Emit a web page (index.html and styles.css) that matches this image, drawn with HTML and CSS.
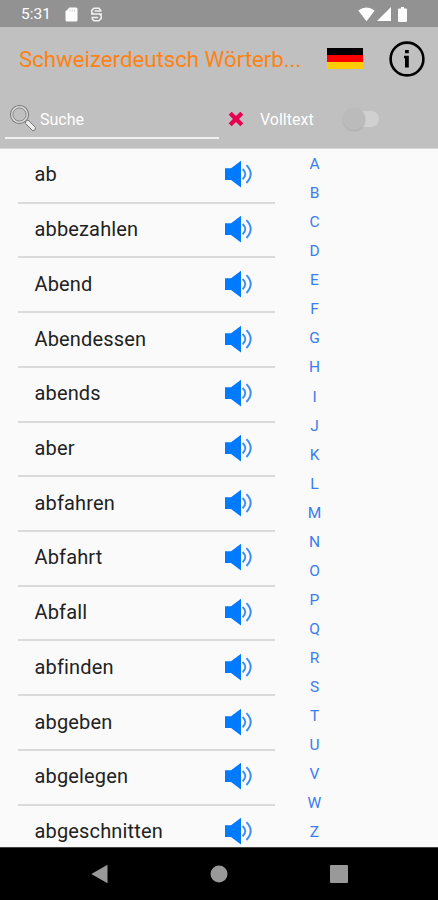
FILE: index.html
```
<!DOCTYPE html>
<html lang="de">
<head>
    <meta charset="UTF-8">
    <meta name="viewport" content="width=device-width, initial-scale=1.0">
    <title>Schweizerdeutsch Wörterbuch</title>
    <link rel="stylesheet" href="styles.css">

    <script>

        let words = ["ab", "abbezahlen", "Abend", "Abendessen", "abends", "aber", "abfahren", "Abfahrt", "Abfall", "abfinden", "abgeben", "abgelegen", "abgeschnitten"];

        let letters = "ABCDEFGHIJKLMNOPQRSTUVWZ";

        function show_words()
        {
            let list = document.getElementById("word_list");

            words.forEach(function(word)
            {
                let li = document.createElement("li");
                li.innerHTML = `<span>${word}</span><svg class="speaker" viewBox="0 0 28 28"><use href="#speaker"/></svg>`;
                list.appendChild(li);
            });
        }

        function show_letters()
        {
            let index = document.getElementById("letter_list");

            letters.split("").forEach(function(letter)
            {
                let li = document.createElement("li");
                li.textContent = letter;
                index.appendChild(li);
            });
        }

        document.addEventListener("DOMContentLoaded", function()
        {
            show_words();
            show_letters();
        });

    </script>

</head>
<body>
    <svg class="symbols">
        <symbol id="speaker" viewBox="0 0 28 28">
            <path d="M0 8.2H6L16 0.8V27.4L6 20H0Z" fill="#007aff"/>
            <path d="M17.6 9Q23 14 17.6 19.4M21.4 5.2Q30 14 21.4 23" fill="none" stroke="#3b8df5" stroke-width="1.9"/>
        </symbol>
    </svg>

    <div class="status_bar">
        <span class="time">5:31</span>
        <svg class="sd_card" width="13" height="15" viewBox="0 0 13 15">
            <path d="M4.5 0.5H11Q12.5 0.5 12.5 2V13Q12.5 14.5 11 14.5H2Q0.5 14.5 0.5 13V4.5Z" fill="#fff"/>
            <path d="M5 2.5V4.5M7.3 2.5V4.5M9.6 2.5V4.5" stroke="#ccc" stroke-width="1"/>
        </svg>
        <svg class="sync" width="13" height="15" viewBox="0 0 13 15">
            <path d="M10.8 3.6L9 1.2H4L1.7 3.4V5.2L3.6 7H9.4L11.2 8.8V11.4L8.8 13.8H4L1.8 11.4M1 7H12M4.5 4H11.5M1.5 10.4H8" fill="none" stroke="#f2f2f2" stroke-width="1.5"/>
        </svg>
        <svg class="wifi" width="17" height="15" viewBox="0 0 17 15">
            <path d="M0.3 3.6Q8.5 -2.8 16.7 3.6L8.5 14.3Z" fill="#fff"/>
        </svg>
        <svg class="signal" width="14" height="14" viewBox="0 0 14 14">
            <path d="M14 0V14H0Z" fill="#fff"/>
        </svg>
        <svg class="battery" width="9" height="15" viewBox="0 0 9 15">
            <path d="M3 0H6V1.5H8Q9 1.5 9 2.5V14Q9 15 8 15H1Q0 15 0 14V2.5Q0 1.5 1 1.5H3Z" fill="#fff"/>
        </svg>
    </div>

    <header>
        <div class="title_row">
            <h1>Schweizerdeutsch Wörterb...</h1>
            <svg class="flag" width="36" height="21" viewBox="0 0 36 21">
                <rect width="36" height="7" fill="#000"/>
                <rect y="7" width="36" height="7" fill="#f00"/>
                <rect y="14" width="36" height="7" fill="#fc0"/>
            </svg>
            <svg class="info" width="36" height="36" viewBox="0 0 36 36">
                <circle cx="18" cy="18" r="16.4" fill="none" stroke="#000" stroke-width="2.6"/>
                <path d="M16 8.9H19.8V12.3H16ZM15 14.8H19.8V26.4H16V17.2H15Z" fill="#000"/>
            </svg>
        </div>
        <div class="search_row">
            <div class="search_field">
                <svg width="28" height="28" viewBox="0 0 28 28">
                    <circle cx="10.5" cy="10.5" r="9" fill="none" stroke="#777" stroke-width="1.1"/>
                    <circle cx="10.5" cy="10.5" r="7.7" fill="none" stroke="#ddd" stroke-width="1.3"/>
                    <circle cx="10.5" cy="10.5" r="6.6" fill="none" stroke="#888" stroke-width="1"/>
                    <path d="M16.5 17.5L19 16L26.5 23.5Q27 26.5 23.8 26.8L16.6 19.6Z" fill="#eee" stroke="#777" stroke-width="1"/>
                </svg>
                <span>Suche</span>
            </div>
            <svg class="clear" width="16" height="16" viewBox="0 0 16 16">
                <path d="M2.2 2.2L13.8 13.8M13.8 2.2L2.2 13.8" stroke="#e6004f" stroke-width="4.3"/>
            </svg>
            <span class="fulltext">Volltext</span>
            <div class="switch"><div class="knob"></div></div>
        </div>
    </header>

    <main>
        <ul id="word_list"></ul>
        <ul id="letter_list"></ul>
    </main>

    <footer>
        <svg width="17" height="20" viewBox="0 0 17 20"><path d="M0.3 10L16.5 0.8V19.2Z" fill="#999"/></svg>
        <svg width="18" height="18" viewBox="0 0 18 18"><circle cx="9" cy="9" r="8.5" fill="#999"/></svg>
        <svg width="18" height="18" viewBox="0 0 18 18"><rect width="18" height="18" rx="1" fill="#999"/></svg>
    </footer>
</body>
</html>
```
FILE: styles.css
```
/* General */
*{
    box-sizing: border-box;
}
body{
    display: flex;
    flex-direction: column;
    height: 900px;
    margin: 0px;
    overflow: hidden;
    background-color: #fafafa;
    font-family: Roboto, "Liberation Sans", sans-serif;
}
ul{
    list-style: none;
    margin: 0px;
    padding: 0px;
}
svg{
    display: block;
    flex-shrink: 0;
}
.symbols{
    display: none;
}

/* Status bar */
.status_bar{
    display: flex;
    align-items: center;
    flex-shrink: 0;
    height: 27px;
    padding: 1px 31px 0px 21px;
    background-color: #929292;
    color: white;
}
.time{
    width: 44px;
    font-size: 15.5px;
}
.sync{
    margin-left: 12px;
}
.wifi{
    margin-left: auto;
}
.signal{
    margin: 0px 7px 0px 2px;
}

/* Header */
header{
    flex-shrink: 0;
    height: 122px;
    background-color: #c0c0c0;
    border-bottom: 1px solid #d8d8d8;
}
.title_row{
    display: flex;
    align-items: center;
    height: 63px;
    padding-left: 19px;
}
h1{
    width: 308px;
    margin: 1px 0px 0px;
    color: #ff8214;
    font-size: 22.3px;
    font-weight: 400;
    letter-spacing: -0.04px;
    white-space: nowrap;
}
.info{
    margin-left: 26px;
}
.search_row{
    display: flex;
    align-items: center;
    height: 58px;
    padding-left: 5px;
    color: white;
    font-size: 16px;
}
.search_field{
    display: flex;
    align-items: center;
    width: 214px;
    height: 40px;
    padding-left: 4px;
    border-bottom: 2px solid #f0f0f0;
}
.search_field span{
    margin: 2px 0px 0px 3px;
}
.clear{
    margin-left: 9px;
}
.fulltext{
    margin: 1px 0px 0px 16px;
    width: 83px;
}
.switch{
    width: 36px;
    height: 16px;
    border-radius: 8px;
    background-color: #d0d0d0;
}
.knob{
    width: 22px;
    height: 22px;
    margin-top: -3px;
    border-radius: 50%;
    background-color: #bbb;
    box-shadow: 0px 1px 2px #aaa;
}

/* Lists */
main{
    display: flex;
    flex: 1;
    min-height: 0px;
    overflow: hidden;
    padding-left: 18px;
}
#word_list{
    width: 257px;
}
#word_list li{
    display: flex;
    justify-content: space-between;
    align-items: center;
    height: 54.72px;
    padding: 0px 22px 2px 16.5px;
    border-bottom: 2px solid #dadada;
    color: #222;
    font-size: 20px;
    letter-spacing: 0.15px;
}
.speaker{
    width: 28px;
    height: 28px;
}
#letter_list{
    width: 79px;
    color: #3b7df0;
    font-size: 15.5px;
    text-align: center;
}
#letter_list li{
    height: 29.07px;
    line-height: 31px;
}

/* Navigation bar */
footer{
    display: flex;
    align-items: center;
    justify-content: center;
    flex-shrink: 0;
    gap: 102px;
    height: 53px;
    background-color: black;
    border-top: 1px solid #444;
}
```
